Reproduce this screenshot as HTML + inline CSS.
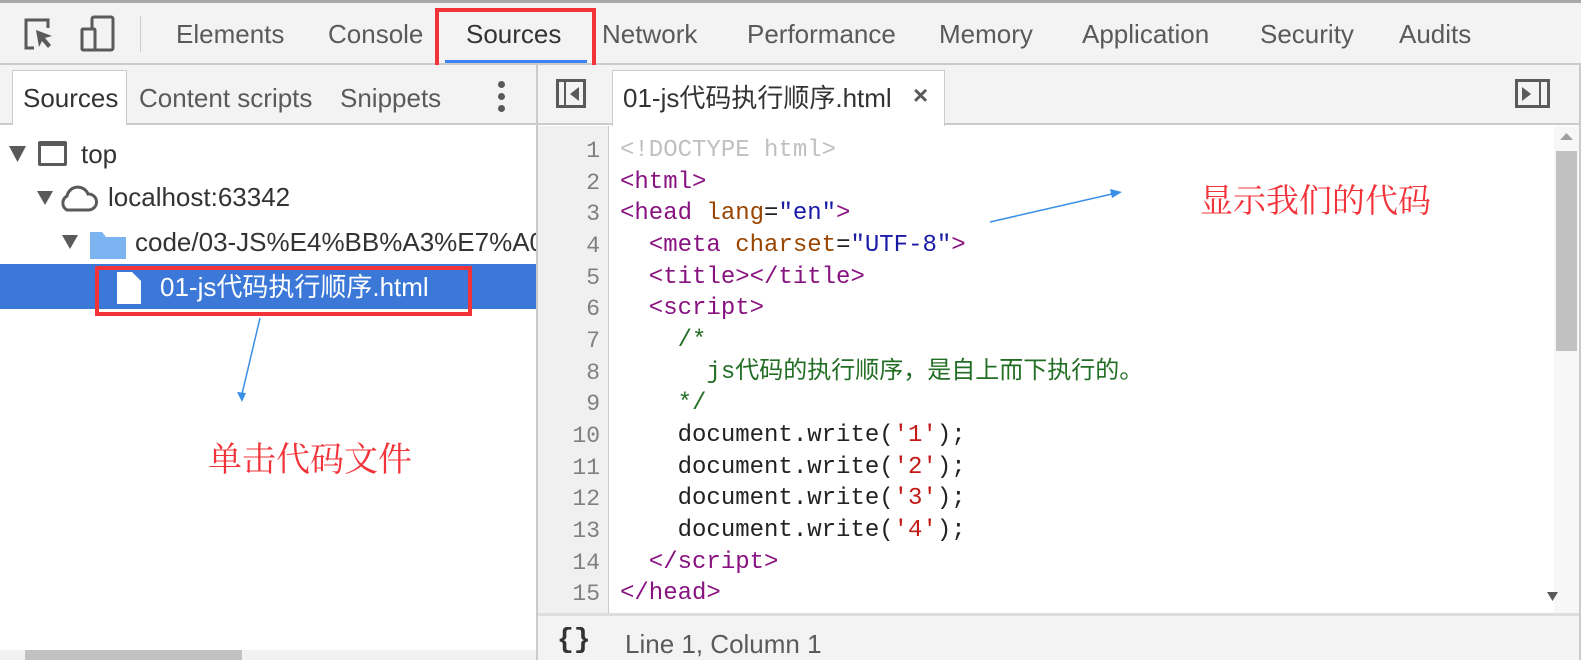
<!DOCTYPE html>
<html><head><meta charset="utf-8"><style>
*{margin:0;padding:0;box-sizing:border-box}
body{width:1581px;height:660px;overflow:hidden;background:#fff;position:relative;font-family:"Liberation Sans","Noto Sans CJK SC",sans-serif;color:#333}
.a{position:absolute;white-space:nowrap}
.tab{font-size:26px;color:#5a5a5a;top:18px;line-height:32px}
.ln{position:absolute;left:538px;width:62px;text-align:right;color:#808080;font-family:"Liberation Mono",monospace;font-size:23px;line-height:30px}
.cl{position:absolute;left:620px;font-family:"Liberation Mono","Noto Sans CJK SC",monospace;font-size:24px;white-space:pre;color:#222;line-height:30px;height:30px}
.t{color:#881280}.at{color:#994500}.v{color:#1a1aa6}.c{color:#236e25}.s{color:#c41a16}
</style></head><body>
<div class="a" style="left:0;top:0;width:1581px;height:65px;background:#f3f3f3;border-top:3px solid #a8a8a8;border-bottom:2px solid #cbcbcb"></div>
<svg class="a" style="left:22px;top:16px" width="34" height="36" viewBox="0 0 34 36"><path d="M12 32H4V4h22v8" fill="none" stroke="#5a5a5a" stroke-width="3"/><path d="M14 14l16 6-7 2 6 7-3 3-6-7-3 6z" fill="#5a5a5a"/></svg>
<svg class="a" style="left:80px;top:15px" width="36" height="38" viewBox="0 0 36 38"><rect x="12" y="2" width="21" height="33" rx="2" fill="none" stroke="#5a5a5a" stroke-width="3"/><rect x="2" y="14" width="13" height="21" rx="1" fill="#f3f3f3" stroke="#5a5a5a" stroke-width="3"/></svg>
<div class="a" style="left:140px;top:16px;width:1px;height:36px;background:#ccc"></div>
<div class="a tab" style="left:176px">Elements</div>
<div class="a tab" style="left:328px">Console</div>
<div class="a tab" style="left:466px;color:#333">Sources</div>
<div class="a" style="left:445px;top:60px;width:142px;height:3px;background:#3e82f7"></div>
<div class="a" style="left:435px;top:8px;width:161px;height:63px;border:4px solid #f2333a"></div>
<div class="a tab" style="left:602px">Network</div>
<div class="a tab" style="left:747px">Performance</div>
<div class="a tab" style="left:939px">Memory</div>
<div class="a tab" style="left:1082px">Application</div>
<div class="a tab" style="left:1260px">Security</div>
<div class="a tab" style="left:1399px">Audits</div>
<div class="a" style="left:0;top:65px;width:1581px;height:60px;background:#f3f3f3;border-bottom:2px solid #cbcbcb"></div>
<div class="a" style="left:12px;top:70px;width:115px;height:55px;background:#fff;border:1px solid #ccc;border-bottom:none"></div>
<div class="a" style="left:23px;top:82px;font-size:26px;line-height:32px;color:#333">Sources</div>
<div class="a" style="left:139px;top:82px;font-size:26px;line-height:32px;color:#5a5a5a">Content scripts</div>
<div class="a" style="left:340px;top:82px;font-size:26px;line-height:32px;color:#5a5a5a">Snippets</div>
<div class="a" style="left:498px;top:81px;width:7px;height:7px;border-radius:50%;background:#5a5a5a;box-shadow:0 12px 0 #5a5a5a,0 24px 0 #5a5a5a"></div>
<div class="a" style="left:536px;top:65px;width:2px;height:595px;background:#cbcbcb"></div>
<svg class="a" style="left:556px;top:79px" width="36" height="32"><rect x="1.5" y="1.5" width="27" height="26" fill="none" stroke="#5a5a5a" stroke-width="3"/><line x1="9" y1="2" x2="9" y2="28" stroke="#5a5a5a" stroke-width="2"/><path d="M23 8v14l-9-7z" fill="#5a5a5a"/></svg>
<div class="a" style="left:612px;top:70px;width:333px;height:56px;background:#fff;border:1px solid #ccc;border-bottom:none"></div>
<div class="a" style="left:623px;top:80px;font-size:26px;line-height:36px;color:#333">01-js代码执行顺序.html</div>
<div class="a" style="left:913px;top:80px;font-size:26px;color:#5a5a5a;font-weight:bold">×</div>
<svg class="a" style="left:1515px;top:79px" width="36" height="32"><rect x="1.5" y="1.5" width="32" height="26" fill="none" stroke="#5a5a5a" stroke-width="3"/><line x1="25" y1="2" x2="25" y2="28" stroke="#5a5a5a" stroke-width="2"/><path d="M7 8v14l9-7z" fill="#5a5a5a"/></svg>
<svg class="a" style="left:8px;top:145px" width="20" height="18"><path d="M1 1h17L9.5 17z" fill="#5a5a5a"/></svg>
<div class="a" style="left:38px;top:141px;width:29px;height:25px;border:3px solid #5a5a5a;border-top-width:5px;border-radius:2px"></div>
<div class="a" style="left:81px;top:138px;font-size:26px;line-height:32px;color:#333">top</div>
<svg class="a" style="left:36px;top:190px" width="18" height="16"><path d="M1 1h16L9 15z" fill="#5a5a5a"/></svg>
<svg class="a" style="left:57px;top:183px" width="42" height="30"><path d="M10 27a8 8 0 0 1 0-14a11 11 0 0 1 21-2a8 8 0 0 1 1 16z" fill="none" stroke="#5a5a5a" stroke-width="3"/></svg>
<div class="a" style="left:108px;top:181px;font-size:26px;line-height:32px;color:#333">localhost:63342</div>
<svg class="a" style="left:61px;top:234px" width="18" height="16"><path d="M1 1h16L9 15z" fill="#5a5a5a"/></svg>
<svg class="a" style="left:90px;top:229px" width="36" height="30"><path d="M0 3h12l4 5h20v22H0z" fill="#7cb4f2"/></svg>
<div class="a" style="left:135px;top:226px;width:401px;overflow:hidden;font-size:26px;line-height:32px;color:#333">code/03-JS%E4%BB%A3%E7%A0%81%E6%89</div>
<div class="a" style="left:0;top:264px;width:536px;height:45px;background:#3b78d8"></div>
<svg class="a" style="left:117px;top:272px" width="24" height="32"><path d="M0 0h15l9 9v23H0z" fill="#fff"/></svg>
<div class="a" style="left:160px;top:269px;font-size:26px;line-height:36px;color:#fff">01-js代码执行顺序.html</div>
<div class="a" style="left:95px;top:266px;width:377px;height:50px;border:4px solid #f2333a"></div>
<svg class="a" style="left:0;top:0" width="1581" height="660"><line x1="260" y1="318" x2="242" y2="394" stroke="#3a8ee6" stroke-width="1.5"/><path d="M237 392l5 10 4-9z" fill="#3a8ee6"/><line x1="990" y1="222" x2="1112" y2="194" stroke="#3a8ee6" stroke-width="1.5"/><path d="M1110 189l12 3-10 6z" fill="#3a8ee6"/></svg>
<div class="a" style="left:208px;top:432px;font-size:34px;color:#f2333a;font-family:'Noto Serif CJK SC',serif">单击代码文件</div>
<div class="a" style="left:1200px;top:175px;font-size:33px;color:#f2333a;font-family:'Noto Serif CJK SC',serif">显示我们的代码</div>
<div class="a" style="left:538px;top:126px;width:71px;height:490px;background:#f0f0f0;border-right:1px solid #ccc"></div>
<div class="ln" style="top:136px">1</div><div class="ln" style="top:168px">2</div><div class="ln" style="top:199px">3</div><div class="ln" style="top:231px">4</div><div class="ln" style="top:263px">5</div><div class="ln" style="top:294px">6</div><div class="ln" style="top:326px">7</div><div class="ln" style="top:358px">8</div><div class="ln" style="top:389px">9</div><div class="ln" style="top:421px">10</div><div class="ln" style="top:453px">11</div><div class="ln" style="top:484px">12</div><div class="ln" style="top:516px">13</div><div class="ln" style="top:548px">14</div><div class="ln" style="top:579px">15</div>
<div class="cl" style="top:136px;color:#c0c0c0">&lt;!DOCTYPE html&gt;</div>
<div class="cl t" style="top:168px">&lt;html&gt;</div>
<div class="cl" style="top:199px"><span class="t">&lt;head </span><span class="at">lang</span>=<span class="v">"en"</span><span class="t">&gt;</span></div>
<div class="cl" style="top:231px">  <span class="t">&lt;meta </span><span class="at">charset</span>=<span class="v">"UTF-8"</span><span class="t">&gt;</span></div>
<div class="cl t" style="top:263px">  &lt;title&gt;&lt;/title&gt;</div>
<div class="cl t" style="top:294px">  &lt;script&gt;</div>
<div class="cl c" style="top:326px">    /*</div>
<div class="cl c" style="top:358px">      js代码的执行顺序，是自上而下执行的。</div>
<div class="cl c" style="top:389px">    */</div>
<div class="cl" style="top:421px">    document.write(<span class="s">'1'</span>);</div>
<div class="cl" style="top:453px">    document.write(<span class="s">'2'</span>);</div>
<div class="cl" style="top:484px">    document.write(<span class="s">'3'</span>);</div>
<div class="cl" style="top:516px">    document.write(<span class="s">'4'</span>);</div>
<div class="cl t" style="top:548px">  &lt;/script&gt;</div>
<div class="cl t" style="top:579px">&lt;/head&gt;</div>
<div class="a" style="left:1554px;top:126px;width:25px;height:490px;background:#f7f7f7"></div>
<svg class="a" style="left:1560px;top:133px" width="14" height="8"><path d="M0 7h13L6.5 0z" fill="#a0a0a0"/></svg>
<div class="a" style="left:1556px;top:151px;width:21px;height:200px;background:#c1c1c1"></div>
<svg class="a" style="left:1547px;top:592px" width="12" height="10"><path d="M0 0h11L5.5 9z" fill="#5a5a5a"/></svg>
<div class="a" style="left:1579px;top:65px;width:2px;height:595px;background:#cbcbcb"></div>
<div class="a" style="left:538px;top:613px;width:1041px;height:47px;background:#f3f3f3;border-top:3px solid #ddd"></div>
<div class="a" style="left:557px;top:625px;font-size:28px;color:#333;font-weight:bold;font-family:'Liberation Mono',monospace">{}</div>
<div class="a" style="left:625px;top:628px;font-size:26px;line-height:32px;color:#5a5a5a">Line 1, Column 1</div>
<div class="a" style="left:0;top:650px;width:536px;height:10px;background:#f1f1f1"></div>
<div class="a" style="left:25px;top:650px;width:217px;height:10px;background:#c1c1c1"></div>
</body></html>
